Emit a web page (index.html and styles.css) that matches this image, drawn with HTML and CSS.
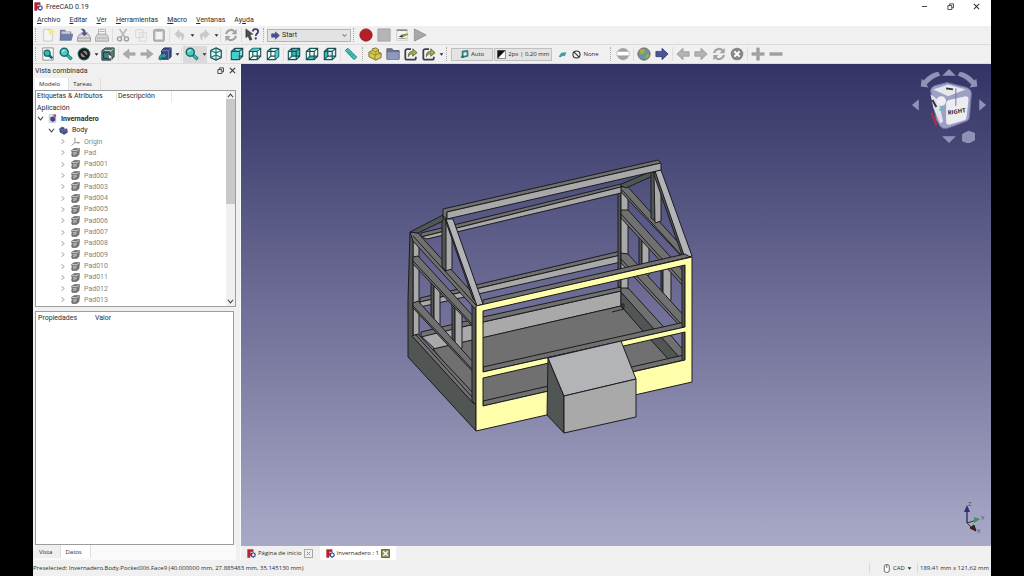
FILE: index.html
```html
<!DOCTYPE html>
<html lang="es">
<head>
<meta charset="utf-8">
<title>FreeCAD 0.19</title>
<link rel="stylesheet" href="styles.css">
</head>
<body>
<svg class="defs" aria-hidden="true">
  <defs>
    <symbol id="logo" viewBox="0 0 16 16"><path d="M1 1h10v4H5.500v2.500H9v3.500H5.500V15H1z" fill="#c3202b" stroke="#7d1118" stroke-width=".6"/><circle cx="11" cy="10.500" r="3.400" fill="none" stroke="#3f4c92" stroke-width="2"/><path d="M11 5v2M11 14v2M5.800 10.500h2M14.500 10.500h1.500M7.200 6.800l1.400 1.400M13.500 13l1.200 1.200M14.800 6.800l-1.300 1.300M7.200 14.200L8.600 13" stroke="#3f4c92" stroke-width="1.500"/></symbol>
    <symbol id="new" viewBox="0 0 16 16"><path d="M3 1.500h8l2 2V15H3z" fill="#f4f4f4" stroke="#c6c6c6"/><path d="M12 0l1 2.500L16 3l-2 2 .6 3L12 6.500 9 8l.7-3L8 3l2.800-.5z" fill="#f1ef6a"/></symbol>
    <symbol id="open" viewBox="0 0 16 16"><path d="M1 2h6l1 2h6v10H1z" fill="#7c7f91"/><path d="M3 4h10v4H3z" fill="#c9ccd4"/><path d="M3 7h13l-2 7H1z" fill="#6f7fae" stroke="#566390" stroke-width=".6"/></symbol>
    <symbol id="save" viewBox="0 0 16 16"><path d="M3 7h10l2.500 4v4H.5v-4z" fill="#d8d8d8" stroke="#8d8d8d"/><path d="M1 11.500h14" stroke="#999"/><path d="M4 1c4-1 6 1 6 4h2.500L8.500 9.500 4.500 5H7c0-2-1-3-3-4z" fill="#4d5796"/></symbol>
    <symbol id="print" viewBox="0 0 16 16"><path d="M4 7V1.500h8V7" fill="#f6f6f6" stroke="#aaa"/><path d="M3 7h10l2.500 4v4H.5v-4z" fill="#d6d6d6" stroke="#9d9d9d"/><path d="M2 11.500h12M5 4h6" stroke="#aaa"/></symbol>
    <symbol id="cut" viewBox="0 0 16 16"><path d="M4 1l6.500 10M12 1L5.500 11" stroke="#b9b9b9" stroke-width="2"/><circle cx="4" cy="12.500" r="2.300" fill="none" stroke="#9a9a9a" stroke-width="1.500"/><circle cx="12" cy="12.500" r="2.300" fill="none" stroke="#9a9a9a" stroke-width="1.500"/></symbol>
    <symbol id="copy" viewBox="0 0 16 16"><path d="M2 2h8v9H2zM6 5h8v10H6z" fill="#f1f1f1" stroke="#d2d2d2"/><path d="M8 8h4M8 10.500h4" stroke="#d6d6d6"/></symbol>
    <symbol id="paste" viewBox="0 0 16 16"><rect x="2" y="2" width="12" height="13" rx="1" fill="#bbb" stroke="#959595"/><path d="M4 4h8v9H4z" fill="#f3f3f3"/><path d="M5 1h6v3H5z" fill="#aaa"/></symbol>
    <symbol id="undo" viewBox="0 0 16 16"><path d="M7 2v3c6 0 7 5 3 9 1-4 0-5-3-5v3L2 7z" fill="#cbcbcb" stroke="#bdbdbd" stroke-width=".6"/></symbol>
    <symbol id="redo" viewBox="0 0 16 16"><path d="M9 2v3c-6 0-7 5-3 9-1-4 0-5 3-5v3l5-5z" fill="#cbcbcb" stroke="#bdbdbd" stroke-width=".6"/></symbol>
    <symbol id="refresh" viewBox="0 0 16 16"><path d="M2.500 7a5.500 5.500 0 019.500-3M13.500 9A5.500 5.500 0 014 12" fill="none" stroke="#a2a2a2" stroke-width="2.400"/><path d="M14.500 1v6h-6zM1.500 15V9h6z" fill="#a2a2a2"/></symbol>
    <symbol id="help" viewBox="0 0 16 16"><path d="M1 1l8 6-3.500.5L8 13l-2.500 1L3.500 9 1 11z" fill="#4d4d4d" stroke="#222" stroke-width=".6"/><path d="M9 4c0-3.500 6-3.500 6 0 0 2.500-2.700 2-2.700 5" fill="none" stroke="#3a4170" stroke-width="2"/><circle cx="12.300" cy="12" r="1.300" fill="#3a4170"/></symbol>
    <symbol id="go" viewBox="0 0 16 16"><path d="M1 5h7V1.500L15 8l-7 6.500V11H1z" fill="#4a5496" stroke="#2b3266" stroke-width=".8"/></symbol>
    <symbol id="right" viewBox="0 0 16 16"><path d="M1 5.500h7V1.500L15 8l-7 6.500v-4H1z" fill="#b4b4b4" stroke="#8f8f8f" stroke-width=".8"/></symbol>
    <symbol id="left" viewBox="0 0 16 16"><path d="M15 5.500H8V1.500L1 8l7 6.500v-4h7z" fill="#b4b4b4" stroke="#8f8f8f" stroke-width=".8"/></symbol>
    <symbol id="thinright" viewBox="0 0 16 16"><path d="M1 6.500h7v-4L15 8l-7 5.500v-4H1z" fill="#ababab" stroke="#979797" stroke-width=".6"/></symbol>
    <symbol id="thinleft" viewBox="0 0 16 16"><path d="M15 6.500H8v-4L1 8l7 5.500v-4h7z" fill="#ababab" stroke="#979797" stroke-width=".6"/></symbol>
    <symbol id="record" viewBox="0 0 16 16"><circle cx="8" cy="8" r="7" fill="#b21f26" stroke="#8c161c"/></symbol>
    <symbol id="stop" viewBox="0 0 16 16"><path d="M1 1h14v14H1z" fill="#b5b5b5" stroke="#a3a3a3"/></symbol>
    <symbol id="edit" viewBox="0 0 16 16"><path d="M2 2h12v12H2z" fill="#f4f4f0" stroke="#ccccc4"/><path d="M2 2.500h12" stroke="#77776a" stroke-width="1.500"/><path d="M4 12h9" stroke="#999"/><path d="M6 8l8-2 1.500 1.500L8 11z" fill="#8f9a48"/><path d="M4 9.500l4 1.300 1-2.500z" fill="#333"/></symbol>
    <symbol id="play" viewBox="0 0 16 16"><path d="M1.500 1l13.500 7-13.500 7z" fill="#a8a8a8" stroke="#929292"/></symbol>
    <symbol id="fitall" viewBox="0 0 16 16"><path d="M2 1h12v14H2z" fill="#fafafa" stroke="#888"/><path d="M8 8l5 5" stroke="#17676a" stroke-width="3"/><circle cx="7" cy="7" r="3.500" fill="#36b9b3" stroke="#17676a" stroke-width="1.300"/></symbol>
    <symbol id="zoom" viewBox="0 0 16 16"><path d="M9 9l5.500 5" stroke="#17676a" stroke-width="3.600"/><path d="M9 9l5 4.500" stroke="#39c4bd" stroke-width="1.800"/><circle cx="6" cy="6" r="4.600" fill="#4bc9c2" stroke="#17676a" stroke-width="1.700"/><path d="M4 6a2.500 2.500 0 013-2.500" stroke="#d9fffc" fill="none"/></symbol>
    <symbol id="drawstyle" viewBox="0 0 16 16"><circle cx="8" cy="8" r="7.300" fill="#2f6866"/><circle cx="8" cy="8" r="5" fill="#8a8a8a" stroke="#1a1a1a" stroke-width="2.300"/><path d="M4.500 4.500l7 7" stroke="#1a1a1a" stroke-width="2.300"/></symbol>
    <symbol id="bbox" viewBox="0 0 16 16"><path d="M1 4l4-3h10v10l-4 4H1z" fill="#597775" stroke="#263b3b"/><path d="M3 6h7v7H3z" fill="#2f8e88" stroke="#183536"/><path d="M10 6l4-4M4 4h7" stroke="#ced5d5"/><path d="M8 8l1 6 1.500-1.500L12 15l1.200-1-1.700-2H14z" fill="#fff" stroke="#222" stroke-width=".5"/></symbol>
    <symbol id="link" viewBox="0 0 16 16"><path d="M4 4l3-3h8v10l-3 3H4z" fill="#3e4a87" stroke="#232b59"/><path d="M4 4h8v10M12 4l3-3" stroke="#7680ba" fill="none"/><path d="M1 14c0-4 2-6 5-6V6l4 4-4 4v-2c-2 0-3 1-3 3z" fill="#2f9b95" stroke="#184d4c" stroke-width=".7"/></symbol>
    <symbol id="iso" viewBox="0 0 16 16"><path d="M8 1l6 3v8l-6 3-6-3V4z" fill="#eafafa" stroke="#1d5153" stroke-width="1.400"/><path d="M2 4l6 3 6-3M8 7v8M2 12l6-3 6 3M8 1v8" fill="none" stroke="#20777a" stroke-width="1.400"/></symbol>
    <symbol id="wire" viewBox="0 0 16 16"><path d="M1.500 5l4-3.500h9v9l-4 4h-9zM1.500 5h9v9.500M10.500 5l4-3.500M5.500 1.500v9h9M1.500 14.500l4-4" fill="none" stroke="#185355" stroke-width="1.300"/></symbol>
    <symbol id="front" viewBox="0 0 16 16"><path d="M1.500 5l4-3.500h9v9l-4 4h-9z" fill="#8fdcd8"/><use href="#wire"/><path d="M2.200 5.700h7.600v8H2.200z" fill="#44d1cb"/></symbol>
    <symbol id="top" viewBox="0 0 16 16"><path d="M1.500 5l4-3.500h9v9l-4 4h-9z" fill="#f3f9f9"/><use href="#wire"/><path d="M2.500 4.500l3.200-2.800h8L10.300 4.500z" fill="#44d1cb"/></symbol>
    <symbol id="side" viewBox="0 0 16 16"><path d="M1.500 5l4-3.500h9v9l-4 4h-9z" fill="#f3f9f9"/><use href="#wire"/><path d="M11 5.400l3-2.800v8l-3 3z" fill="#44d1cb"/></symbol>
    <symbol id="rear" viewBox="0 0 16 16"><path d="M1.500 5l4-3.500h9v9l-4 4h-9z" fill="#d8f1ef"/><path d="M5.500 1.500h9v9h-9z" fill="#35bcb5"/><use href="#wire"/></symbol>
    <symbol id="bottom" viewBox="0 0 16 16"><path d="M1.500 5l4-3.500h9v9l-4 4h-9z" fill="#f3f9f9"/><path d="M1.500 14.500l4-4h9l-4 4z" fill="#35bcb5"/><use href="#wire"/></symbol>
    <symbol id="leftside" viewBox="0 0 16 16"><path d="M1.500 5l4-3.500h9v9l-4 4h-9z" fill="#dcefee"/><path d="M1.500 5l4-3.500v9l-4 4z" fill="#35bcb5"/><use href="#wire"/></symbol>
    <symbol id="measure" viewBox="0 0 16 16"><path d="M1.500 4l3-2.500 10 10-3 3z" fill="#42c3bd" stroke="#1c7275"/><path d="M5 7l1.500-1.500M7 9l1.500-1.500M9 11l1.500-1.500" stroke="#1c7275"/></symbol>
    <symbol id="part" viewBox="0 0 16 16"><path d="M1 6l4-2V2l4-1 3 2v3l3 1v5l-6 3-8-4z" fill="#d9c94f" stroke="#6e651e"/><path d="M1 6l7 3 7-2M8 9v6M5 4l4 1.500L12 3M9 5.500V8" fill="none" stroke="#8b812c"/></symbol>
    <symbol id="group" viewBox="0 0 16 16"><path d="M1 2h6l1 2h7v10H1z" fill="#6f7590" stroke="#565c76"/><path d="M1.500 6h13v8h-13z" fill="#8d99bd"/></symbol>
    <symbol id="makelink" viewBox="0 0 16 16"><path d="M8 2.500H3.500a2 2 0 00-2 2v8a2 2 0 002 2h8a2 2 0 002-2V11" fill="none" stroke="#3a3f52" stroke-width="2"/><path d="M5 11c0-5 2-6 5-6V2l5 4.500-5 4V8c-2 0-4 0-5 3z" fill="#a7a950" stroke="#4f5124" stroke-width=".8"/></symbol>
    <symbol id="plane" viewBox="0 0 16 16"><path d="M4 2l10-1v10L4 13z" fill="#33a39d" stroke="#1c6466" stroke-width="1.500"/><path d="M6.500 5l5-1v5l-5 1z" fill="#e6f4f3"/><path d="M1 14l7-1-4-4z" fill="#1c6466"/></symbol>
    <symbol id="contrast" viewBox="0 0 16 16"><path d="M1 1h14v14H1z" fill="#fff" stroke="#333"/><path d="M1 1h14L1 15z" fill="#111"/></symbol>
    <symbol id="facebinder" viewBox="0 0 16 16"><path d="M1 12l5-7 9-1-3 7-4-1-3 3z" fill="#3e9e98"/></symbol>
    <symbol id="none" viewBox="0 0 16 16"><circle cx="8" cy="8" r="6.300" fill="none" stroke="#333" stroke-width="2"/><path d="M3.500 3.500l9 9" stroke="#333" stroke-width="2"/></symbol>
    <symbol id="page" viewBox="0 0 16 16"><circle cx="8" cy="8" r="7" fill="#a2a2a2"/><path d="M1 5h14v5H1z" fill="#fff" stroke="#999" stroke-width=".6"/></symbol>
    <symbol id="globe" viewBox="0 0 16 16"><circle cx="8" cy="8" r="7" fill="#7b8d95" stroke="#5a6260"/><path d="M3 3l5-1 2 4-3 3-4-2zM9 9l4-2 1 3-4 4z" fill="#b5a544"/><path d="M5 10l4-5 3 3-4 5z" fill="#46a6a1"/></symbol>
    <symbol id="cancel" viewBox="0 0 16 16"><circle cx="8" cy="8" r="7.200" fill="#888"/><path d="M5 5l6 6M11 5l-6 6" stroke="#fff" stroke-width="2.400"/></symbol>
    <symbol id="plus" viewBox="0 0 16 16"><path d="M6.500 1h3v5.500H15v3H9.500V15h-3V9.500H1v-3h5.500z" fill="#a3a3a3" stroke="#8c8c8c" stroke-width=".6"/></symbol>
    <symbol id="minus" viewBox="0 0 16 16"><path d="M1 6.500h14v3H1z" fill="#a3a3a3" stroke="#8c8c8c" stroke-width=".6"/></symbol>
    <symbol id="doc" viewBox="0 0 16 16"><path d="M2 1h12v14H2z" fill="#e3e4ee" stroke="#b9bac8"/><path d="M4 6l5-2 4 3v5l-5 2-4-3z" fill="#3e4687"/><path d="M9 1h5v5l-3-1z" fill="#cc3844"/></symbol>
    <symbol id="body" viewBox="0 0 16 16"><path d="M1 5l4-3 4 1v3l5-1 1 6-6 4-7-4z" fill="#45508f" stroke="#2c3466"/><path d="M1 5l5 2 3-1M6 7v6M9 9l6-3" fill="none" stroke="#7f89c0"/></symbol>
    <symbol id="origin" viewBox="0 0 16 16"><path d="M7 1v9h8M7 10l-6 5" fill="none" stroke="#8a8a8a" stroke-width="1.500"/><path d="M12 8l4 2-4 2z" fill="#8a8a8a"/></symbol>
    <symbol id="pad" viewBox="0 0 16 16"><path d="M1 4l5-3h9v3l-1 8-4 3H2l-1-3 1-3z" fill="#777" stroke="#555"/><path d="M2 4.500h8l4-2M3 8.500h5l2-2M4 12l6-2.500" stroke="#ededed" stroke-width="1.200" fill="none"/></symbol>
    <symbol id="mouse" viewBox="0 0 16 16"><rect x="4" y="1" width="9" height="14" rx="4" fill="#fff" stroke="#444" stroke-width="1.400"/><path d="M8.500 1v6" stroke="#444" stroke-width="1.400"/></symbol>
    <symbol id="down" viewBox="0 0 8 8"><path d="M1 2h6L4 6z" fill="#2d2d2d"/></symbol>
    <symbol id="chevdown" viewBox="0 0 8 8"><path d="M1 2l3 3.500L7 2" fill="none" stroke="#444" stroke-width="1.300"/></symbol>
    <symbol id="chevup" viewBox="0 0 8 8"><path d="M1 6l3-3.500L7 6" fill="none" stroke="#444" stroke-width="1.300"/></symbol>
    <symbol id="chevright" viewBox="0 0 8 8"><path d="M2 1.500L4.500 4 2 6.500" fill="none" stroke="#858585" stroke-width="1.100"/></symbol>
    <symbol id="close" viewBox="0 0 8 8"><path d="M1 1l6 6M7 1L1 7" stroke="#333" stroke-width="1.200"/></symbol>
    <symbol id="restore" viewBox="0 0 8 8"><path d="M1 3h4.500v4.500H1zM3 3V1h4.500v4.500h-2" fill="none" stroke="#333"/></symbol>
    <symbol id="minimize" viewBox="0 0 8 8"><path d="M1 4h6" stroke="#333"/></symbol>
    <symbol id="tabclose" viewBox="0 0 10 10"><path d="M.5.500h9v9h-9z" fill="#f2f2f2" stroke="#999"/><path d="M3 3l4 4M7 3L3 7" stroke="#888"/></symbol>
    <symbol id="tabcloseon" viewBox="0 0 10 10"><path d="M.5.500h9v9h-9z" fill="#8d8f52" stroke="#5c5d3a"/><path d="M2.500 2.500l5 5M7.500 2.500l-5 5" stroke="#fff" stroke-width="1.500"/></symbol>
  </defs>
</svg>

<div class="app">
  <header class="titlebar">
    <svg class="ic-s"><use href="#logo"/></svg>
    <h1 class="app-name">FreeCAD 0.19</h1>
    <div class="window-buttons">
      <button aria-label="Minimizar"><svg class="ic-xs"><use href="#minimize"/></svg></button>
      <button aria-label="Restaurar"><svg class="ic-xs"><use href="#restore"/></svg></button>
      <button aria-label="Cerrar"><svg class="ic-xs"><use href="#close"/></svg></button>
    </div>
  </header>

  <nav class="menubar">
    <button><u>A</u>rchivo</button><button><u>E</u>ditar</button><button><u>V</u>er</button><button><u>H</u>erramientas</button><button><u>M</u>acro</button><button><u>V</u>entanas</button><button>Ay<u>u</u>da</button>
  </nav>

  <div class="toolrow">
    <div class="toolbar">
      <button class="tool" aria-label="Nuevo"><svg class="ic"><use href="#new"/></svg></button>
      <button class="tool" aria-label="Abrir"><svg class="ic"><use href="#open"/></svg></button>
      <button class="tool" aria-label="Guardar"><svg class="ic"><use href="#save"/></svg></button>
      <button class="tool" aria-label="Imprimir"><svg class="ic"><use href="#print"/></svg></button>
      <span class="sep"></span>
      <button class="tool" aria-label="Cortar"><svg class="ic"><use href="#cut"/></svg></button>
      <button class="tool" aria-label="Copiar"><svg class="ic"><use href="#copy"/></svg></button>
      <button class="tool" aria-label="Pegar"><svg class="ic"><use href="#paste"/></svg></button>
      <span class="sep"></span>
      <button class="tool" aria-label="Deshacer"><svg class="ic"><use href="#undo"/></svg></button>
      <button class="more" aria-label="Historial de deshacer"><svg class="ic-arrow"><use href="#down"/></svg></button>
      <button class="tool" aria-label="Rehacer"><svg class="ic"><use href="#redo"/></svg></button>
      <button class="more" aria-label="Historial de rehacer"><svg class="ic-arrow"><use href="#down"/></svg></button>
      <span class="sep"></span>
      <button class="tool" aria-label="Actualizar"><svg class="ic"><use href="#refresh"/></svg></button>
      <span class="sep"></span>
      <button class="tool" aria-label="¿Qué es esto?"><svg class="ic"><use href="#help"/></svg></button>
    </div>
    <div class="toolbar">
      <div class="combo">
        <svg class="ic-s"><use href="#go"/></svg>
        <select aria-label="Entorno de trabajo"><option>Start</option></select>
        <svg class="ic-arrow"><use href="#chevdown"/></svg>
      </div>
    </div>
    <div class="toolbar">
      <button class="tool" aria-label="Grabar macro"><svg class="ic"><use href="#record"/></svg></button>
      <button class="tool" aria-label="Detener macro"><svg class="ic"><use href="#stop"/></svg></button>
      <button class="tool" aria-label="Macros"><svg class="ic"><use href="#edit"/></svg></button>
      <button class="tool" aria-label="Ejecutar macro"><svg class="ic"><use href="#play"/></svg></button>
    </div>
  </div>

  <div class="toolrow">
    <div class="toolbar">
      <button class="tool" aria-label="Ajustar todo"><svg class="ic"><use href="#fitall"/></svg></button>
      <button class="tool" aria-label="Ajustar selección"><svg class="ic"><use href="#zoom"/></svg></button>
      <button class="tool" aria-label="Estilo de dibujo"><svg class="ic"><use href="#drawstyle"/></svg></button>
      <button class="more" aria-label="Estilos"><svg class="ic-arrow"><use href="#down"/></svg></button>
      <button class="tool" aria-label="Caja delimitadora"><svg class="ic"><use href="#bbox"/></svg></button>
      <span class="sep"></span>
      <button class="tool" aria-label="Atrás"><svg class="ic"><use href="#thinleft"/></svg></button>
      <button class="tool" aria-label="Adelante"><svg class="ic"><use href="#thinright"/></svg></button>
      <button class="tool" aria-label="Ir al objeto vinculado"><svg class="ic"><use href="#link"/></svg></button>
      <button class="more" aria-label="Vínculos"><svg class="ic-arrow"><use href="#down"/></svg></button>
      <span class="sep"></span>
      <button class="tool active" aria-label="Zoom"><svg class="ic"><use href="#zoom"/></svg></button>
      <button class="more active" aria-label="Opciones de zoom"><svg class="ic-arrow"><use href="#down"/></svg></button>
      <button class="tool" aria-label="Isométrica"><svg class="ic"><use href="#iso"/></svg></button>
      <span class="sep"></span>
      <button class="tool" aria-label="Frontal"><svg class="ic"><use href="#front"/></svg></button>
      <button class="tool" aria-label="Superior"><svg class="ic"><use href="#top"/></svg></button>
      <button class="tool" aria-label="Derecha"><svg class="ic"><use href="#side"/></svg></button>
      <span class="sep"></span>
      <button class="tool" aria-label="Posterior"><svg class="ic"><use href="#rear"/></svg></button>
      <button class="tool" aria-label="Inferior"><svg class="ic"><use href="#bottom"/></svg></button>
      <button class="tool" aria-label="Izquierda"><svg class="ic"><use href="#leftside"/></svg></button>
      <span class="sep"></span>
      <button class="tool" aria-label="Medir distancia"><svg class="ic"><use href="#measure"/></svg></button>
    </div>
    <div class="toolbar">
      <button class="tool" aria-label="Crear pieza"><svg class="ic"><use href="#part"/></svg></button>
      <button class="tool" aria-label="Crear grupo"><svg class="ic"><use href="#group"/></svg></button>
      <button class="tool" aria-label="Crear vínculo"><svg class="ic"><use href="#makelink"/></svg></button>
      <button class="tool" aria-label="Acciones de vínculo"><svg class="ic"><use href="#makelink"/></svg></button>
      <button class="more" aria-label="Más acciones"><svg class="ic-arrow"><use href="#down"/></svg></button>
    </div>
    <div class="toolbar tray">
      <button class="tray-btn boxed"><svg class="ic-s"><use href="#plane"/></svg>Auto</button>
      <button class="tray-btn boxed"><svg class="ic-s"><use href="#contrast"/></svg>2px | 0,20 mm</button>
      <button class="tool" aria-label="Modo construcción"><svg class="ic-s"><use href="#facebinder"/></svg></button>
      <button class="tray-btn"><svg class="ic-s"><use href="#none"/></svg>None</button>
    </div>
    <div class="toolbar">
      <button class="tool" aria-label="Página"><svg class="ic"><use href="#page"/></svg></button>
      <span class="sep"></span>
      <button class="tool" aria-label="Abrir sitio web"><svg class="ic"><use href="#globe"/></svg></button>
      <button class="tool" aria-label="Ir"><svg class="ic"><use href="#go"/></svg></button>
      <span class="sep"></span>
      <button class="tool" aria-label="Página anterior"><svg class="ic"><use href="#left"/></svg></button>
      <button class="tool" aria-label="Página siguiente"><svg class="ic"><use href="#right"/></svg></button>
      <button class="tool" aria-label="Recargar"><svg class="ic"><use href="#refresh"/></svg></button>
      <button class="tool" aria-label="Detener"><svg class="ic"><use href="#cancel"/></svg></button>
      <span class="sep"></span>
      <button class="tool" aria-label="Acercar"><svg class="ic"><use href="#plus"/></svg></button>
      <button class="tool" aria-label="Alejar"><svg class="ic"><use href="#minus"/></svg></button>
    </div>
  </div>

  <main class="workspace">
    <aside class="dock">
      <div class="dock-title"><h2>Vista combinada</h2>
        <button aria-label="Flotar"><svg class="ic-xs"><use href="#restore"/></svg></button>
        <button aria-label="Cerrar panel"><svg class="ic-xs"><use href="#close"/></svg></button>
      </div>
      <div class="tabs"><button class="tab on">Modelo</button><button class="tab">Tareas</button></div>
      <section class="tree-panel">
        <div class="tree">
          <div class="columns"><span>Etiquetas &amp; Atributos</span><span>Descripción</span></div>
          <ul class="rows">
            <li>Aplicación</li>
            <li class="l1 strong"><svg class="ic-xs"><use href="#chevdown"/></svg><svg class="ic-s"><use href="#doc"/></svg>Invernadero</li>
            <li class="l2"><svg class="ic-xs"><use href="#chevdown"/></svg><svg class="ic-s"><use href="#body"/></svg>Body</li>
            <li class="l3"><svg class="ic-xs"><use href="#chevright"/></svg><svg class="ic-s"><use href="#origin"/></svg>Origin</li>
            <li class="l3"><svg class="ic-xs"><use href="#chevright"/></svg><svg class="ic-s"><use href="#pad"/></svg>Pad</li>
            <li class="l3"><svg class="ic-xs"><use href="#chevright"/></svg><svg class="ic-s"><use href="#pad"/></svg>Pad001</li>
            <li class="l3"><svg class="ic-xs"><use href="#chevright"/></svg><svg class="ic-s"><use href="#pad"/></svg>Pad002</li>
            <li class="l3"><svg class="ic-xs"><use href="#chevright"/></svg><svg class="ic-s"><use href="#pad"/></svg>Pad003</li>
            <li class="l3"><svg class="ic-xs"><use href="#chevright"/></svg><svg class="ic-s"><use href="#pad"/></svg>Pad004</li>
            <li class="l3"><svg class="ic-xs"><use href="#chevright"/></svg><svg class="ic-s"><use href="#pad"/></svg>Pad005</li>
            <li class="l3"><svg class="ic-xs"><use href="#chevright"/></svg><svg class="ic-s"><use href="#pad"/></svg>Pad006</li>
            <li class="l3"><svg class="ic-xs"><use href="#chevright"/></svg><svg class="ic-s"><use href="#pad"/></svg>Pad007</li>
            <li class="l3"><svg class="ic-xs"><use href="#chevright"/></svg><svg class="ic-s"><use href="#pad"/></svg>Pad008</li>
            <li class="l3"><svg class="ic-xs"><use href="#chevright"/></svg><svg class="ic-s"><use href="#pad"/></svg>Pad009</li>
            <li class="l3"><svg class="ic-xs"><use href="#chevright"/></svg><svg class="ic-s"><use href="#pad"/></svg>Pad010</li>
            <li class="l3"><svg class="ic-xs"><use href="#chevright"/></svg><svg class="ic-s"><use href="#pad"/></svg>Pad011</li>
            <li class="l3"><svg class="ic-xs"><use href="#chevright"/></svg><svg class="ic-s"><use href="#pad"/></svg>Pad012</li>
            <li class="l3"><svg class="ic-xs"><use href="#chevright"/></svg><svg class="ic-s"><use href="#pad"/></svg>Pad013</li>
          </ul>
        </div>
        <div class="scrollbar"><svg class="ic-xs"><use href="#chevup"/></svg><div class="track"><div class="thumb"></div></div><svg class="ic-xs"><use href="#chevdown"/></svg></div>
      </section>
      <section class="props">
        <table><thead><tr><th>Propiedades</th><th>Valor</th></tr></thead></table>
      </section>
      <div class="tabs bottom"><button class="tab">Vista</button><button class="tab on">Datos</button></div>
    </aside>

    <section class="mdi">
      <div class="viewport">
        <svg class="scene" viewBox="241 64 750 482" role="img" aria-label="Modelo 3D del invernadero">
          <g class="edges">
            <!-- back wall and floor -->
            <path class="lt" d="M421 336L621 291V306L435 349z"/>
            <path class="md" d="M421 332L483 317 621 287V291L483 322 421 337z"/>
            <path class="md" d="M433 349L621 306 671 359 483 402 476 402z"/>
            <!-- right wall base -->
            <path class="dk" d="M621 292V306L642 330 669 360 681 357z"/>
            <path class="md" d="M621 285L629 289 662 325 684 351V359L679 357 621 292z"/>
            <path class="line" d="M612 312L624 309M622 304h2v4h-2z"/>
            <!-- rear rail -->
            <path class="md" d="M420 298L621 251V255L420 302z"/>
            <path class="lt" d="M420 302L621 255V262L420 307z"/>
            <!-- right wall -->
            <path class="dk" d="M618 187h3V287h-3z"/>
            <path class="lt" d="M621 187h7V288h-7z"/>
            <path class="dk" d="M639 234h3V271h-3z"/>
            <path class="lt" d="M642 237L649 240V275L645 277 642 274z"/>
            <path class="dk" d="M661 261h2V297h-2z"/>
            <path class="lt" d="M663 265h8V300L667 302 663 298z"/>
            <path class="md" d="M621 253L628 254 686 318V329L681 327 621 263z"/>
            <path class="line" d="M621 259L683 326"/>
            <path class="md" d="M621 210H628L686 274V289L621 218z"/>
            <path class="line" d="M621 214L685 284"/>
            <path class="md" d="M621 187L627 186 686 251 684 259 621 192z"/>
            <path class="line" d="M622 190L682 256"/>
            <path class="dk" d="M619 185L652 171 655 175 626 188z"/>
            <path class="dk" d="M651 172h4V221L651 218z"/>
            <path class="lt" d="M654 175L661 180V221L655 223z"/>
            <path class="dk" d="M653 172L657 174 686 256 682 255z"/>
            <path class="rf" d="M655 171L661 170 692 256 685 258z"/>
            <!-- roof plates -->
            <path class="md" d="M421 233L621 184V187L421 237z"/>
            <path class="lt" d="M421 237L621 187V193L427 239z"/>
            <!-- left wall -->
            <path class="lt" d="M413 236L419 242V335L413 337z"/>
            <path class="dk" d="M410 232L413 235V337L476 405V431L408 357V300z"/>
            <path class="md" d="M412 336L418 334 474 394V404z"/>
            <path class="line" d="M415 334L473 398"/>
            <path class="dk" d="M431 278L434 281V326L431 323z"/>
            <path class="lt" d="M434 278L440 285V325L434 327z"/>
            <path class="dk" d="M452 300L455 303V350L452 346z"/>
            <path class="lt" d="M455 303L462 311V348L455 351z"/>
            <path class="md" d="M413 303L418 301 474 363V373L413 308z"/>
            <path class="line" d="M413 306L474 371"/>
            <path class="md" d="M413 257L418 256 474 317V328L413 264z"/>
            <path class="line" d="M413 261L474 326"/>
            <path class="dk" d="M472 300h4V405L472 401z"/>
            <path class="md" d="M410 232L418 233 478 299 476 310 413 241z"/>
            <path class="line" d="M413 236L476 305"/>
            <path class="lt" d="M445 220H452V269L445 271z"/>
            <path class="dk" d="M442 216h4V271L442 267z"/>
            <path class="dk" d="M410 232L443 215 443 221 418 233z"/>
            <path class="dk" d="M445 219L449 219 477 303 473 299z"/>
            <path class="rf" d="M446 219H453L483 304 477 306z"/>
            <path class="md" d="M443 209L658 160 661 163 447 212V219L443 216z"/>
            <path class="lt" d="M447 212L661 163V170L447 219z"/>
            <!-- highlighted front face -->
            <path class="md" d="M483 300L685 254 690 257 483 305z"/>
            <path class="md" d="M483 367L685 322V327L483 372zM483 401L684 355V360L483 406z"/>
            <path class="dk" d="M682 265h3V327h-3zM682 332h3V361h-3z"/>
            <path class="hi" fill-rule="evenodd" d="M476 306L692 257V382L476 431zM483 311V372L685 327V265zM483 378V406L685 360V332z"/>
            <!-- entrance block -->
            <path class="dk" d="M548 358L564 396V433L547 415z"/>
            <path class="rf" d="M548 358L621 341 636 379 564 396z"/>
            <path class="lt" d="M564 396L636 379V417L564 433z"/>
          </g>
        </svg>
        <svg class="navcube" viewBox="0 0 80 80" role="img" aria-label="Cubo de navegación">
          <g fill="#9292b8"><path d="M39 4l7 7H32zM39 80l-7-7h14zM1 41l7-6v12zM77 41l-7-6v12z"/><path d="M28 7l2 4c-7 2-11 6-14 9l2 3-8-1 1-8 2 2c4-5 9-8 15-9zM50 7l-2 4c7 2 11 6 14 9l-2 3 8-1-1-8-2 2c-4-5-9-8-15-9z"/></g>
          <path d="M20 26q1-4 5-5l12-3 20 5q5 2 5 6l-2 24q0 4-4 5l-19 7q-4 1-7-2l-4-7z" fill="#9d9fc4" stroke="#6e70a2"/>
          <path d="M23 25l15-5 18 5-18 7z" fill="#e7e7ef"/>
          <path d="M36 40q0-3 3-4l17-4q3 0 3 3l-2 18q0 3-3 4l-14 4q-4 1-4-3z" fill="#ececf1"/>
          <path d="M20 30l8 6 5 22-3 2-7-16z" fill="#e2e2ea"/>
          <circle cx="31" cy="37" r="5" fill="#eeeef3"/>
          <text class="cube-label" x="38" y="51" transform="rotate(-8 38 51)">RIGHT</text>
          <path d="M36 24l7 1M22 36l4 7" stroke="#333" stroke-width="2"/>
          <path d="M46 24v18" stroke="#77779c"/>
          <path d="M21 49l5 13" stroke="#b72d42" stroke-width="2"/><path d="M29 46h5" stroke="#53c9b9" stroke-width="2"/>
          <path d="M53 71l6-3 6 2v7l-6 3-6-2z" fill="#8e90b8" stroke="#b0b0cc" stroke-width=".7"/>
        </svg>
        <svg class="axes" viewBox="0 0 28 34" role="img" aria-label="Ejes">
          <path d="M7 23V8" stroke="#303070" stroke-width="1.400"/><path d="M7 5l3 7H4z" fill="#303070"/>
          <path d="M7 23l10-3" stroke="#333"/><path d="M14 17l6 2-6 4z" fill="#3f8d6a"/>
          <path d="M7 23l7 7" stroke="#333"/><path d="M10 28l4-3 2 6z" fill="#512" stroke="#222"/>
          <text x="8" y="6">Z</text><text x="21" y="20">Y</text><text x="17" y="33">X</text>
        </svg>
      </div>
      <div class="doc-tabs">
        <div class="doc-tab"><button><svg class="ic-s"><use href="#logo"/></svg>Página de inicio</button><button aria-label="Cerrar Página de inicio"><svg class="ic-s"><use href="#tabclose"/></svg></button></div>
        <div class="doc-tab on"><button><svg class="ic-s"><use href="#logo"/></svg>Invernadero : 1</button><button aria-label="Cerrar Invernadero"><svg class="ic-s"><use href="#tabcloseon"/></svg></button></div>
      </div>
    </section>
  </main>

  <footer class="status">
    <span class="message">Preselected: Invernadero.Body.Pocket006.Face9 (40.000000 mm, 27.885483 mm, 35.145130 mm)</span>
    <button class="navstyle"><svg class="ic-s"><use href="#mouse"/></svg>CAD<svg class="ic-arrow"><use href="#down"/></svg></button>
    <span class="size">189,41 mm x 121,62 mm</span>
  </footer>
</div>
</body>
</html>
```
FILE: styles.css
```css
* { box-sizing: border-box; }

body {
  margin: 0;
  background: #000;
  color: #2b2b2b;
  font: 7px/10px Roboto, "Open Sans", sans-serif;
}

button, select {
  margin: 0;
  padding: 0;
  border: 0;
  background: none;
  color: inherit;
  font: inherit;
}

h1, h2 { margin: 0; font: inherit; }

svg { display: block; flex: none; }
.defs { position: absolute; width: 0; height: 0; }
.ic { width: 14px; height: 14px; }
.ic-s { width: 9px; height: 9px; }
.ic-xs { width: 7px; height: 7px; }
.ic-arrow { width: 5px; height: 5px; }

.app {
  display: flex;
  flex-direction: column;
  height: 100vh;
  margin: 0 33px;
  background: #f0f0f0;
}

.titlebar {
  display: flex;
  align-items: center;
  gap: 3px;
  height: 13px;
  padding-left: 1px;
  background: #fff;
}
.window-buttons { display: flex; gap: 19px; margin-left: auto; padding-right: 11px; }

.menubar {
  display: flex;
  gap: 9px;
  height: 13px;
  padding-left: 4px;
  background: #fff;
}

.toolrow { display: flex; height: 19px; border-bottom: 1px solid #dcdcdc; }
.toolbar { display: flex; align-items: center; }
.toolbar::before {
  content: "";
  width: 2px;
  height: 14px;
  margin: 0 1px 0 2px;
  border-left: 1px dotted #a8a8a8;
}
.tool { display: grid; place-items: center; width: 18px; height: 17px; }
.more { display: grid; place-items: center; width: 6px; height: 17px; }
.active { background: #dadada; }
.sep { width: 1px; height: 14px; margin: 0 1px; background: #dedede; }

.combo {
  display: flex;
  align-items: center;
  gap: 2px;
  width: 84px;
  height: 13px;
  padding: 0 3px;
  border: 1px solid #b4b4b4;
  background: #e3e3e3;
}
.combo select { flex: 1; appearance: none; }

.tray { width: 164px; gap: 1px; }
.tray-btn { display: flex; align-items: center; justify-content: center; gap: 2px; height: 13px; white-space: nowrap; }
.boxed { padding: 0 2px; border: 1px solid #c0c0c0; background: #e4e4e4; }
.boxed:first-child { padding: 0 8px; }

.tray, .tab, .doc-tabs, .status { font: 6px/10px "Open Sans", "Noto Sans", sans-serif; }

.workspace { display: flex; flex: 1; min-height: 0; }

.dock {
  display: flex;
  flex-direction: column;
  width: 208px;
  padding: 0 4px 0 2px;
  border-right: 1px solid #fafafa;
}
.dock-title { display: flex; align-items: center; gap: 5px; height: 13px; }
.dock-title h2 { flex: 1; }
.tabs { display: flex; height: 13px; align-items: flex-end; }
.tab { height: 12px; padding: 0 8px 0 4px; border-right: 1px solid #dedede; }
.tab.on { background: #fff; }
.tabs.bottom { height: 15px; align-items: flex-start; background: #fafafa; }
.tabs.bottom .tab { height: 13px; }
.tabs.bottom .tab:not(.on) { background: #efefef; }

.tree-panel {
  display: flex;
  flex: 216;
  border: 1px solid #9c9c9c;
  background: #fff;
}
.tree { display: flex; flex: 1; flex-direction: column; }
.columns { display: grid; grid-template-columns: 81px 55px; height: 11px; }
.columns span { padding-left: 1px; border-right: 1px solid #e8e8e8; }
.rows {
  display: flex;
  flex: 1;
  flex-direction: column;
  margin: 0;
  padding: 0;
  list-style: none;
}
.rows li { display: flex; flex: 1; align-items: center; gap: 4px; padding-left: 1px; }
.rows .l1 { padding-left: 1px; }
.rows .l2 { padding-left: 12px; }
.rows .l3 { padding-left: 24px; color: #858585; }
.strong { font-weight: 700; }

.scrollbar { display: flex; flex-direction: column; align-items: center; width: 9px; padding: 1px 0; background: #f0f0f0; }
.track { flex: 1; width: 100%; }
.thumb { height: 53%; background: #c9c9c9; }

.props {
  flex: 234;
  margin: 4px 2px 0 0;
  border: 1px solid #9c9c9c;
  background: #fff;
}
.props table { border-spacing: 0; }
.props th { width: 57px; padding: 1px 2px; font-weight: 400; text-align: left; }

.mdi { display: flex; flex: 1; flex-direction: column; }
.viewport {
  position: relative;
  flex: 1;
  min-height: 0;
  background: linear-gradient(#333366, #a9a9c7);
}
.scene { width: 100%; height: 100%; }
.navcube { position: absolute; top: 1px; right: 2px; width: 78px; height: 78px; }
.cube-label { font: 700 6px "Open Sans", sans-serif; fill: #222; }
.axes { position: absolute; right: 3px; bottom: 12px; width: 28px; height: 34px; }
.axes text { font: 6px "Open Sans", sans-serif; fill: #444466; }

.edges path { stroke: #1c1c20; stroke-width: 1; stroke-linejoin: round; }
.edges .lt { fill: #a9a9a9; }
.edges .md { fill: #707070; }
.edges .dk { fill: #515553; }
.edges .rf { fill: #b3b4b7; }
.edges .hi { fill: #ffffab; }
.edges .line { fill: none; }

.doc-tabs { display: flex; height: 14px; padding-left: 3px; }
.doc-tab { display: flex; align-items: center; gap: 2px; padding: 0 7px 0 3px; }
.doc-tab button { display: flex; align-items: center; gap: 2px; }
.doc-tab.on { padding: 0 6px; background: #fff; }

.status { display: flex; align-items: center; height: 16px; }
.message { flex: 1; }
.navstyle { display: flex; align-items: center; gap: 2px; padding: 0 5px 0 12px; border-left: 1px solid #dadada; }
.size { padding: 0 2px; border-left: 1px solid #dadada; }
```
